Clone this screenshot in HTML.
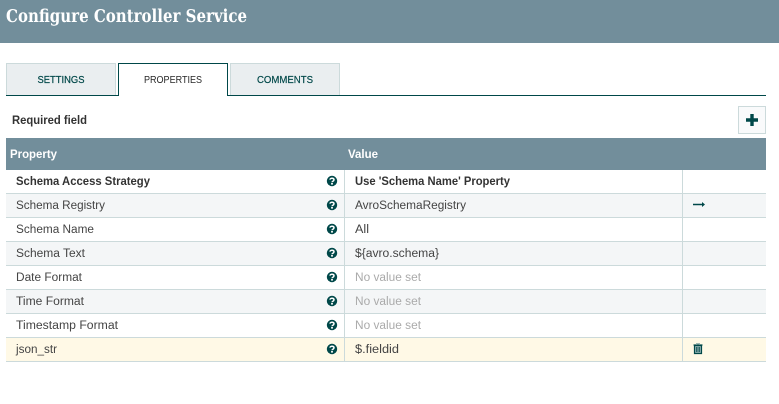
<!DOCTYPE html>
<html><head><meta charset="utf-8"><title>Configure Controller Service</title>
<style>
html,body{margin:0;padding:0;background:#fff;width:779px;height:404px;overflow:hidden}
svg{display:block}
text{font-family:"Liberation Sans",sans-serif;font-size:12px;fill:#262626}
.t{font-size:11.5px;fill:#444}
.n{font-size:11.5px;fill:#aaa}
.b{font-size:11.5px;font-weight:bold;fill:#333}
.tab{font-size:10px;fill:#004849;stroke:#004849;stroke-width:.2px}
.l{stroke:#ccdadb;stroke-width:1;fill:none}
</style></head><body>
<svg width="779" height="404" viewBox="0 0 779 404" xmlns="http://www.w3.org/2000/svg">
<defs>
<g id="h"><circle cx="0" cy="0" r="5.200" fill="#004849"/><path d="M-2 -1.4C-2 -3.100 2 -3.300 2 -1.200C2 0.200 0 0.200 0 1.300" fill="none" stroke="#fff" stroke-width="1.500"/><rect x="-0.9" y="2" width="1.800" height="1.600" fill="#fff"/></g>
</defs>
<rect x="0" y="0" width="779" height="43" fill="#728e9b"/>
<text x="6" y="22" textLength="241" lengthAdjust="spacingAndGlyphs" style="font-family:'DejaVu Serif',serif;font-size:17.500px;font-weight:bold;fill:#fff">Configure Controller Service</text>

<rect x="6.500" y="63.500" width="109" height="32" fill="#eaeef0" stroke="#ccdadb"/>
<rect x="230.500" y="63.500" width="109" height="32" fill="#eaeef0" stroke="#ccdadb"/>
<path d="M6 95.500H118.500V63.500H227.500V95.500H766" fill="none" stroke="#004849" stroke-width="1"/>
<text class="tab" x="37.500" y="83" textLength="47" lengthAdjust="spacingAndGlyphs">SETTINGS</text>
<text x="144" y="83" textLength="58" lengthAdjust="spacingAndGlyphs" style="font-size:10px;fill:#262626">PROPERTIES</text>
<text class="tab" x="257" y="83" textLength="56" lengthAdjust="spacingAndGlyphs">COMMENTS</text>

<text x="12" y="124" textLength="75" lengthAdjust="spacingAndGlyphs" style="font-weight:bold;font-size:12px;fill:#333">Required field</text>
<rect x="738.500" y="106.500" width="27" height="27" fill="#f9fafb" stroke="#ccdadb"/>
<path d="M752 114V126M746 120H758" stroke="#004849" stroke-width="3.400" fill="none"/>

<rect x="6" y="138" width="760" height="32" fill="#728e9b"/>
<text x="10" y="158" textLength="47" lengthAdjust="spacingAndGlyphs" style="font-weight:bold;fill:#fff">Property</text>
<text x="348" y="158" textLength="30" lengthAdjust="spacingAndGlyphs" style="font-weight:bold;fill:#fff">Value</text>

<rect x="6" y="194" width="760" height="23" fill="#f4f6f7"/>
<rect x="6" y="242" width="760" height="23" fill="#f4f6f7"/>
<rect x="6" y="290" width="760" height="23" fill="#f4f6f7"/>
<rect x="6" y="338" width="760" height="23" fill="#fff9e6"/>

<path class="l" d="M6 193.500H766M6 217.500H766M6 241.500H766M6 265.500H766M6 289.500H766M6 313.500H766M6 337.500H766M6 361.500H766M344.500 170V361M682.500 170V361"/>

<text class="b" x="16" y="185" textLength="134" lengthAdjust="spacingAndGlyphs">Schema Access Strategy</text>
<text class="t" x="16" y="209" textLength="89" lengthAdjust="spacingAndGlyphs">Schema Registry</text>
<text class="t" x="16" y="233" textLength="78" lengthAdjust="spacingAndGlyphs">Schema Name</text>
<text class="t" x="16" y="257" textLength="69" lengthAdjust="spacingAndGlyphs">Schema Text</text>
<text class="t" x="16" y="281" textLength="66" lengthAdjust="spacingAndGlyphs">Date Format</text>
<text class="t" x="16" y="305" textLength="68" lengthAdjust="spacingAndGlyphs">Time Format</text>
<text class="t" x="16" y="329" textLength="102" lengthAdjust="spacingAndGlyphs">Timestamp Format</text>
<text class="t" x="16" y="353" textLength="41" lengthAdjust="spacingAndGlyphs">json_str</text>

<use href="#h" x="332" y="181"/>
<use href="#h" x="332" y="205"/>
<use href="#h" x="332" y="229"/>
<use href="#h" x="332" y="253"/>
<use href="#h" x="332" y="277"/>
<use href="#h" x="332" y="301"/>
<use href="#h" x="332" y="325"/>
<use href="#h" x="332" y="349"/>

<text class="b" x="355" y="185" textLength="155" lengthAdjust="spacingAndGlyphs">Use 'Schema Name' Property</text>
<text class="t" x="355" y="209" textLength="111" lengthAdjust="spacingAndGlyphs">AvroSchemaRegistry</text>
<text class="t" x="355" y="233" textLength="14" lengthAdjust="spacingAndGlyphs">All</text>
<text class="t" x="355" y="257" textLength="84" lengthAdjust="spacingAndGlyphs">${avro.schema}</text>
<text class="n" x="355" y="281" textLength="66" lengthAdjust="spacingAndGlyphs">No value set</text>
<text class="n" x="355" y="305" textLength="66" lengthAdjust="spacingAndGlyphs">No value set</text>
<text class="n" x="355" y="329" textLength="66" lengthAdjust="spacingAndGlyphs">No value set</text>
<text class="t" x="355" y="353" textLength="44" lengthAdjust="spacingAndGlyphs">$.fieldid</text>

<path d="M693 204.500H702" stroke="#004849" stroke-width="1.500" fill="none"/>
<path d="M702 202L705 204.500L702 207Z" fill="#004849"/>

<path d="M693.500 345H702.500" stroke="#004849" stroke-width="1.200"/>
<path d="M696.500 345V343.800H699.500V345" stroke="#7fa3a4" stroke-width="1" fill="none"/>
<path d="M694.500 345.500H701.500V353.500H694.500Z" fill="#8fb0b1" stroke="#004849" stroke-width="1.200"/>
<path d="M696.500 347V352M698 347V352M699.500 347V352" stroke="#004849" stroke-width="0.700"/>
</svg>
</body></html>
